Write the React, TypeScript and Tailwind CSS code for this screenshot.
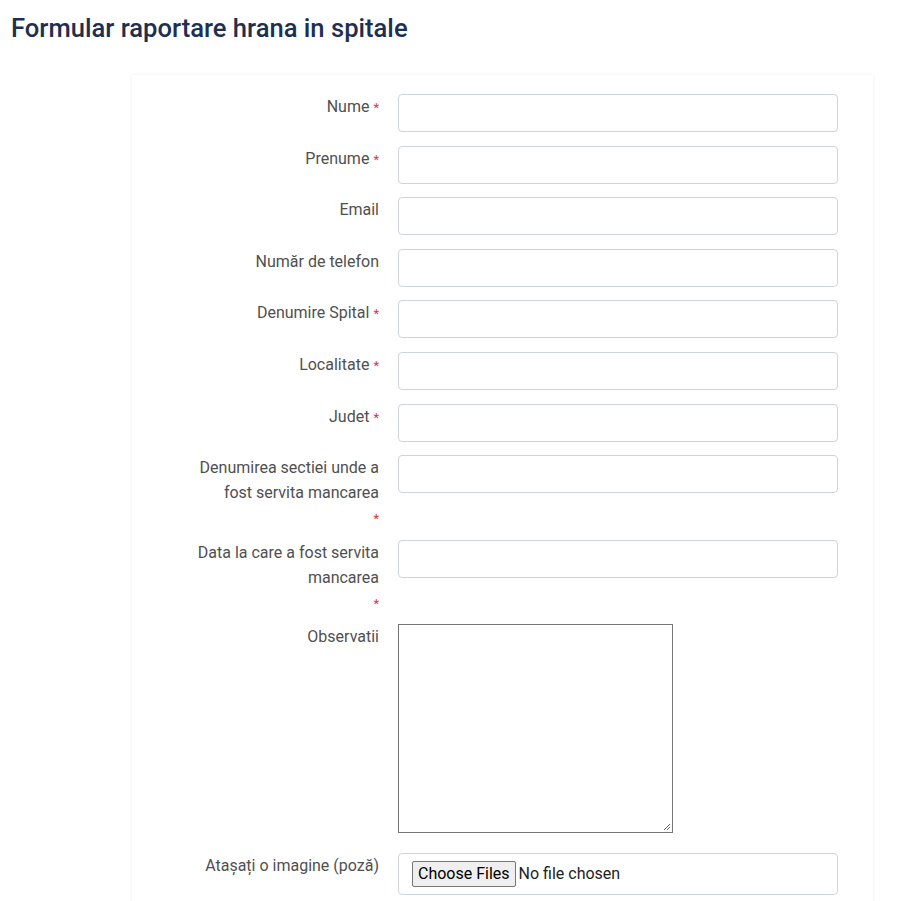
import React from "react";

const font = { fontFamily: "Roboto, 'Liberation Sans', sans-serif" };

function Req() {
  return <span className="text-[#dc3545] text-[13px] ml-[4px]">*</span>;
}

function Row({
  label,
  required,
  starBelow,
  children,
  rowClass = "mb-[13.6px]",
}: {
  label: string;
  required?: boolean;
  starBelow?: boolean;
  children: React.ReactNode;
  rowClass?: string;
}) {
  return (
    <div className={`flex ${rowClass}`}>
      <div className="w-[247px] shrink-0 pl-[52px] text-right text-[16px] leading-[25px] text-[#505050]">
        {label}
        {required && !starBelow && <Req />}
        {required && starBelow && (
          <>
            <br />
            <span className="text-[#dc3545] text-[13px]">*</span>
          </>
        )}
      </div>
      <div className="ml-[19px] flex-1">{children}</div>
    </div>
  );
}

function TextInput() {
  return (
    <div className="h-[38px] w-[440px] rounded-[4px] border border-[#cfd4d9] bg-white" />
  );
}

export default function App() {
  return (
    <div className="min-h-[901px] bg-white" style={font}>
      <h1 className="pl-[11px] pt-[12px] text-[25.6px] font-medium leading-[32px] text-[#1e3050]">
        Formular raportare hrana in spitale
      </h1>
      <div className="ml-[132px] mt-[31px] w-[741px] pt-[19px] pb-[20px] shadow-[0_0_4px_rgba(0,0,0,0.07)]">
        <Row label="Nume" required>
          <TextInput />
        </Row>
        <Row label="Prenume" required>
          <TextInput />
        </Row>
        <Row label="Email">
          <TextInput />
        </Row>
        <Row label="Număr de telefon">
          <TextInput />
        </Row>
        <Row label="Denumire Spital" required>
          <TextInput />
        </Row>
        <Row label="Localitate" required>
          <TextInput />
        </Row>
        <Row label="Judet" required>
          <TextInput />
        </Row>
        <Row label="Denumirea sectiei unde a fost servita mancarea" required starBelow rowClass="mb-[9px]">
          <TextInput />
        </Row>
        <Row label="Data la care a fost servita mancarea" required starBelow rowClass="mb-[8px]">
          <TextInput />
        </Row>
        <Row label="Observatii" rowClass="mb-[20px]">
          <div className="relative h-[209px] w-[275px] border border-[#767676] bg-white">
            <svg className="absolute right-[1px] bottom-[1px]" width="8" height="8" viewBox="0 0 8 8">
              <path d="M7 1 L1 7 M7 4 L4 7" stroke="#6b6b6b" strokeWidth="1" fill="none" />
            </svg>
          </div>
        </Row>
        <Row label="Atașați o imagine (poză)" rowClass="mb-0">
          <div className="flex h-[42px] w-[440px] items-center rounded-[4px] border border-[#cfd4d9] bg-white pl-[13px]">
            <span className="flex h-[26px] items-center rounded-[2px] border border-[#767676] bg-[#efefef] px-[5px] text-[16px] text-black">
              Choose Files
            </span>
            <span className="ml-[3px] text-[16px] text-[#222]">No file chosen</span>
          </div>
        </Row>
      </div>
    </div>
  );
}
